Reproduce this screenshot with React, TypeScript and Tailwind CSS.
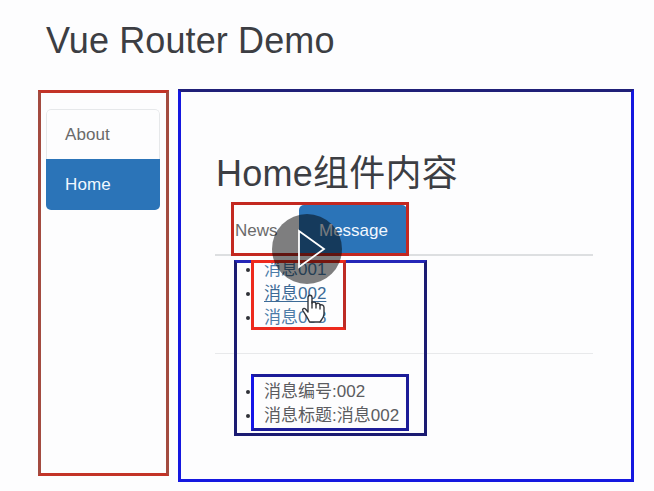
const messages = ['消息001', '消息002', '消息003'];
const details = ['消息编号:002', '消息标题:消息002'];

function Bullet() {
  return <span className="mr-[14px] size-[4px] shrink-0 rounded-full bg-[#303238]" />;
}

function Sidebar() {
  return (
    <aside className="h-[386px] w-[131px] border-[3px] border-[#c33327] border-x-[#a34b40] px-[5px] pt-4">
      <nav className="w-[114px] overflow-hidden rounded-[5px] text-[17px] tracking-[0.1px]">
        <a className="flex h-[50px] items-center rounded-t-[5px] border border-b-0 border-[#e6e8ea] pl-[18px] text-[#6a6a6a]">About</a>
        <a className="flex h-[51px] items-center bg-[#2b74b8] pl-[19px] text-[#f2f8ff]">Home</a>
      </nav>
    </aside>
  );
}

function Annotations() {
  return (
    <>
      <div className="absolute left-[234px] top-[260px] h-[176px] w-[193px] border-[3px] border-[#1b1b72] border-t-[#2527b8]" />
      <div className="absolute left-[251px] top-[374px] h-[57px] w-[158px] border-[3px] border-[#1c1c98] border-l-[#1515e8]" />
      <div className="absolute left-[231px] top-[202px] h-[54px] w-[178px] border-[3px] border-[#c32820]" />
      <div className="absolute left-[251px] top-[260px] h-[70px] w-[95px] border-[3px] border-[#ed2a1d] border-r-[#bd2b25]" />
    </>
  );
}

function PlayButton() {
  return (
    <div className="absolute left-[272px] top-[214px] size-[70px] rounded-full bg-black/50">
      <svg className="size-full" viewBox="0 0 70 70" fill="none" stroke="#fff" strokeWidth="1.8">
        <path d="M27 17V53L52 35Z" />
      </svg>
    </div>
  );
}

function HandCursor() {
  return (
    <svg className="absolute left-[301px] top-[294px] h-[29px] w-[24px]" viewBox="0 0 24 29" fill="#fff" stroke="#34373d" strokeWidth="1.4" strokeLinejoin="round" strokeLinecap="round">
      <path d="M7 18V3.5C7 .5 11 .5 11 3.5V9C12 7.5 15 8 15 10C16.5 8.7 19 9.2 19 11C20.8 10.2 23 11.2 23 13.5V20C23 23 21 25 19 28H8.5C7 24 4 20 1.8 16.5C1 14.8 3 13.6 4.5 15Z" />
      <path d="M11 8V14M15 10V14M19 11V15" />
    </svg>
  );
}

export default function App() {
  return (
    <div className="relative h-[491px] w-[654px] overflow-hidden bg-[#fdfdfe] font-['Liberation_Sans','Noto_Sans_CJK_SC',sans-serif] text-[#3c3e43]">
      <h1 className="h-[89px] pl-[46px] pt-[21px] text-[36px] leading-10 tracking-[0.12px]">Vue Router Demo</h1>
      <div className="flex items-start gap-[9px] pl-[38px]">
        <div className="pt-px"><Sidebar /></div>
        <main className="h-[393px] w-[456px] border-[3px] border-[#1518e0] border-t-[#202078] pl-[34px] pr-[38px] pt-[62px]">
          <h2 className="h-[51px] whitespace-nowrap pl-[1px] text-[36px] leading-[40px] tracking-[0.25px]">Home组件内容</h2>
          <div className="flex h-[51px] border-b-2 border-[#dddfe1] pl-[20px] text-[17px]">
            <a className="flex h-[51px] w-[64px] shrink-0 items-center text-[#6a6a6a]">News</a>
            <a className="flex h-[51px] w-[108px] items-center rounded-t-[5px] bg-[#2b74b8] pl-[20px] text-[#f2f8ff]">Message</a>
          </div>
          <ul className="h-[98px] border-b border-[#e8e9eb] pl-[31px] pt-[2px] text-[17px] text-[#4c7ca8]">
            {messages.map((text, index) => (
              <li key={text} className="flex h-6 items-center leading-6">
                <Bullet />
                <span className={index === 1 ? 'text-[#3c6a96] underline underline-offset-2' : ''}>{text}</span>
              </li>
            ))}
          </ul>
          <ul className="pl-[31px] pt-[26px] text-[17px] text-[#5b5c60]">
            {details.map((text) => (
              <li key={text} className="flex h-6 items-center leading-6"><Bullet />{text}</li>
            ))}
          </ul>
        </main>
      </div>
      <Annotations />
      <PlayButton />
      <HandCursor />
    </div>
  );
}
